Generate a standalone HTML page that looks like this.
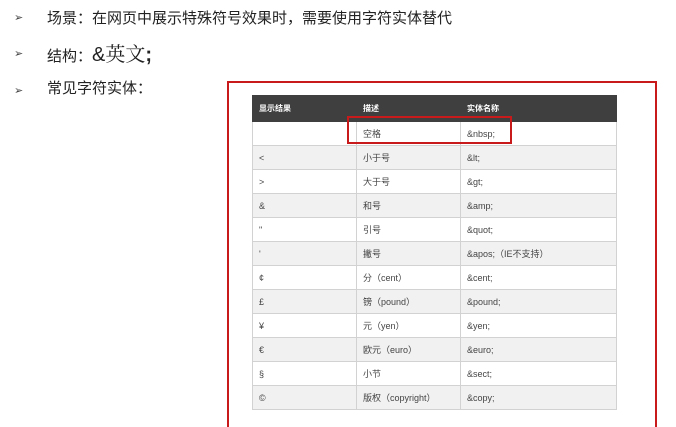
<!DOCTYPE html>
<html style="width:676px;height:427px;overflow:hidden"><head><meta charset="utf-8"><style>
body{margin:0;width:676px;height:427px;background:#fff;position:relative;overflow:hidden;font-family:"Liberation Sans","Noto Sans CJK SC",sans-serif;color:#222}
.b{position:absolute;left:47px;font-size:15px;line-height:20px}
.ar{position:absolute;left:14px;font-size:11px;color:#444}
.outer{position:absolute;left:227px;top:81px;width:430px;height:346px;border:2px solid #c81a1a;border-bottom:none;box-sizing:border-box}
table{position:absolute;left:252px;top:95px;border-collapse:collapse;font-size:9px;table-layout:fixed;width:364px}
td,th{height:23px;padding:0 0 0 6px;text-align:left;border:1px solid #d2d2d2;color:#444;box-sizing:border-box;overflow:hidden;white-space:nowrap}
td{height:24px}
th{background:#3f3f3f;color:#fff;height:26px;border-color:#3f3f3f;font-weight:bold;font-size:8px}
tr:nth-child(odd) td{background:#f1f1f1}
.hl{position:absolute;left:347px;top:116px;width:165px;height:28px;border:2px solid #c81a1a;box-sizing:border-box}
</style></head><body>
<div class="ar" style="top:11px">➢</div><div class="b" style="top:9px">场景：在网页中展示特殊符号效果时，需要使用字符实体替代</div>
<div class="ar" style="top:47px">➢</div><div class="b" style="top:43px">结构：<span style="font-size:20px">&amp;<span style="font-family:'Noto Serif CJK SC',serif">英文</span><b>;</b></span></div>
<div class="ar" style="top:84px">➢</div><div class="b" style="top:79px">常见字符实体：</div>
<div class="outer"></div>
<table>
<colgroup><col style="width:104px"><col style="width:104px"><col style="width:156px"></colgroup>
<tr><th>显示结果</th><th>描述</th><th>实体名称</th></tr>
<tr><td></td><td>空格</td><td>&amp;nbsp;</td></tr>
<tr><td>&lt;</td><td>小于号</td><td>&amp;lt;</td></tr>
<tr><td>&gt;</td><td>大于号</td><td>&amp;gt;</td></tr>
<tr><td>&amp;</td><td>和号</td><td>&amp;amp;</td></tr>
<tr><td>"</td><td>引号</td><td>&amp;quot;</td></tr>
<tr><td>'</td><td>撇号</td><td>&amp;apos;（IE不支持）</td></tr>
<tr><td>¢</td><td>分（cent）</td><td>&amp;cent;</td></tr>
<tr><td>£</td><td>镑（pound）</td><td>&amp;pound;</td></tr>
<tr><td>¥</td><td>元（yen）</td><td>&amp;yen;</td></tr>
<tr><td>€</td><td>欧元（euro）</td><td>&amp;euro;</td></tr>
<tr><td>§</td><td>小节</td><td>&amp;sect;</td></tr>
<tr><td>©</td><td>版权（copyright）</td><td>&amp;copy;</td></tr>
</table>
<div class="hl"></div>
</body></html>
